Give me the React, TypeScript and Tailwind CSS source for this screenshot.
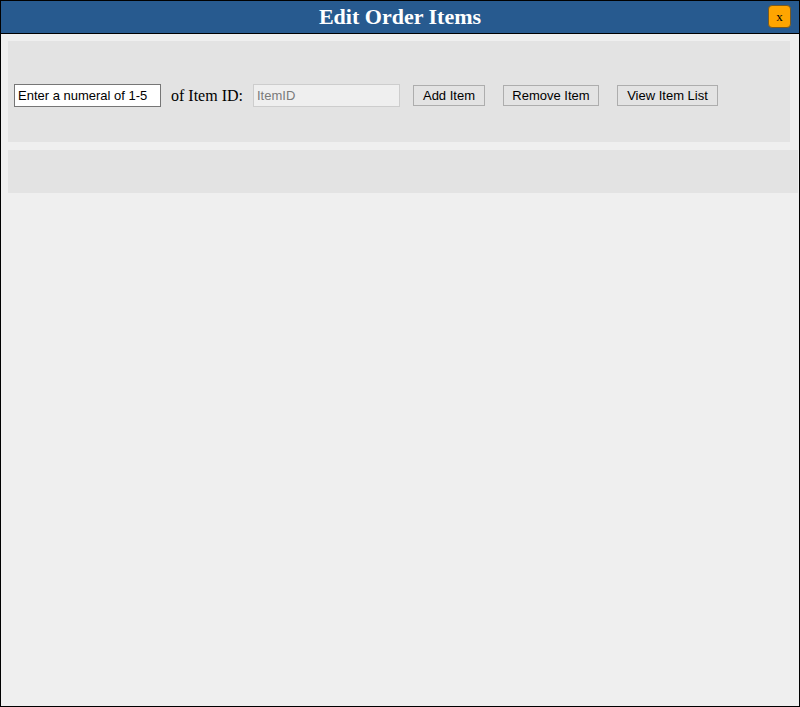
import React from "react";

export default function App() {
  return (
    <div className="w-[800px] h-[707px] border border-black bg-[#efefef] flex flex-col overflow-hidden">
      <div className="h-[33px] shrink-0 bg-[#275a8f] border-b border-black relative flex items-center justify-center">
        <h1 className="text-white font-bold text-[22px] leading-none font-['Liberation_Serif','Times_New_Roman',serif]">
          Edit Order Items
        </h1>
        <button className="absolute right-[8px] top-[4px] w-[23px] h-[23px] rounded-[4px] bg-[#ffa500] border border-[#7a5a20] text-black text-[13px] leading-none flex items-center justify-center font-['Liberation_Serif',serif]">
          x
        </button>
      </div>
      <div className="flex flex-col pt-[7px] pl-[7px]">
        <div className="w-[782px] h-[101px] bg-[#e3e3e3] flex items-center pl-[6px] pt-[8px] font-['Liberation_Sans',Arial,sans-serif]">
          <input
            readOnly
            value="Enter a numeral of 1-5"
            className="w-[147px] h-[23px] bg-white border border-[#767676] px-[3px] text-[13px] text-black outline-none"
          />
          <span className="ml-[10px] text-[16px] text-black font-['Liberation_Serif','Times_New_Roman',serif]">
            of Item ID:
          </span>
          <input
            readOnly
            placeholder="ItemID"
            className="ml-[10px] w-[147px] h-[23px] bg-[#efefef] border border-[#cdcdcd] px-[3px] text-[13px] placeholder:text-[#7a7a7a] outline-none"
          />
          <button className="ml-[13px] w-[72px] h-[21px] bg-[#e3e3e3] border border-[#adadad] text-[13px] text-black leading-none">
            Add Item
          </button>
          <button className="ml-[18px] w-[96px] h-[21px] bg-[#e3e3e3] border border-[#adadad] text-[13px] text-black leading-none">
            Remove Item
          </button>
          <button className="ml-[18px] w-[101px] h-[21px] bg-[#e3e3e3] border border-[#adadad] text-[13px] text-black leading-none">
            View Item List
          </button>
        </div>
        <div className="mt-[8px] w-[790px] h-[43px] bg-[#e3e3e3]" />
      </div>
    </div>
  );
}
